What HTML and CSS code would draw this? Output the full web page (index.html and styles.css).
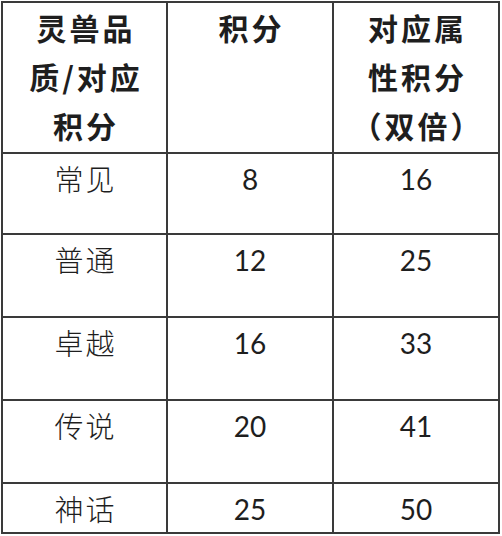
FILE: index.html
```html
<!DOCTYPE html>
<html lang="zh">
<head>
<meta charset="utf-8">
<link rel="stylesheet" href="styles.css">
</head>
<body>
<div class="score">
  <div class="cell head">灵兽品<br>质/对应<br>积分</div>
  <div class="cell head">积分</div>
  <div class="cell head">对应属<br>性积分<br>（双倍）</div>

  <div class="cell name">常见</div><div class="cell num">8</div><div class="cell num">16</div>
  <div class="cell name">普通</div><div class="cell num">12</div><div class="cell num">25</div>
  <div class="cell name">卓越</div><div class="cell num">16</div><div class="cell num">33</div>
  <div class="cell name">传说</div><div class="cell num">20</div><div class="cell num">41</div>
  <div class="cell name">神话</div><div class="cell num">25</div><div class="cell num">50</div>
</div>
</body>
</html>
```
FILE: styles.css
```css
html, body {
  margin: 0;
  padding: 0;
  background: #ffffff;
}
body {
  padding: 1px 0 0 1px;
  height: 535px;
  overflow: hidden;
}
.score {
  display: grid;
  grid-template-columns: 165px 166px 166px;
  grid-template-rows: 151px 81px 83px 83px 83px 50px;
  width: max-content;
  border-top: 2px solid #3a3a3a;
  border-left: 2px solid #3a3a3a;
  color: #1e1e1e;
}
.cell {
  box-sizing: border-box;
  border-right: 2px solid #3a3a3a;
  border-bottom: 2px solid #3a3a3a;
  text-align: center;
}
.head {
  font-family: "Noto Sans CJK SC", sans-serif;
  font-weight: 700;
  font-size: 30px;
  line-height: 49px;
  letter-spacing: 3px;
  padding-left: 3px;
}
.name {
  font-family: "Noto Sans CJK SC", sans-serif;
  font-weight: 300;
  font-size: 29px;
  line-height: 40px;
  letter-spacing: 2px;
  padding-top: 4px;
  padding-left: 2px;
}
.num {
  font-family: Lato, "Liberation Sans", sans-serif;
  font-size: 28px;
  line-height: 40px;
  padding-top: 5px;
}
```
